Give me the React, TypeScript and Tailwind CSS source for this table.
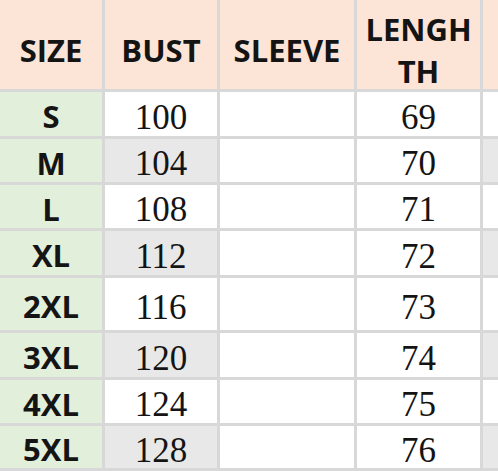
import React from "react";

type Row = { size: string; bust: string; len: string; gray: boolean };

const rows: Row[] = [
  { size: "S", bust: "100", len: "69", gray: false },
  { size: "M", bust: "104", len: "70", gray: true },
  { size: "L", bust: "108", len: "71", gray: false },
  { size: "XL", bust: "112", len: "72", gray: true },
  { size: "2XL", bust: "116", len: "73", gray: false },
  { size: "3XL", bust: "120", len: "74", gray: true },
  { size: "4XL", bust: "124", len: "75", gray: false },
  { size: "5XL", bust: "128", len: "76", gray: true },
];

const sans = "font-['Open_Sans','Noto_Sans',sans-serif] font-bold";
const serif = "font-['Liberation_Serif','Times_New_Roman',serif]";

export default function App() {
  return (
    <div className="w-[498px] h-[471px] overflow-hidden bg-white">
      <div className="grid grid-cols-[102px_112px_134px_123px_1fr] grid-rows-[89px_44px_43px_43px_44px_52px_44px_43px_42px] gap-[3px] bg-[#d8d8d8] pb-[3px] h-[471px] text-[#141414]">
        <div className={`bg-[#fce4d6] flex items-center justify-center pt-[12px] text-[31px] leading-none ${sans}`}>SIZE</div>
        <div className={`bg-[#fce4d6] flex items-center justify-center pt-[12px] text-[31px] leading-none ${sans}`}>BUST</div>
        <div className={`bg-[#fce4d6] flex items-center justify-center pt-[12px] text-[31px] leading-none ${sans}`}>SLEEVE</div>
        <div className={`bg-[#fce4d6] flex flex-col items-center justify-center pt-[10px] text-[31px] leading-[42px] ${sans}`}>
          <span>LENGH</span>
          <span>TH</span>
        </div>
        <div className="bg-[#fce4d6]" />
        {rows.map((r) => (
          <React.Fragment key={r.size}>
            <div className={`bg-[#e2efda] flex items-center justify-center pt-[5px] text-[31px] leading-none ${sans}`}>{r.size}</div>
            <div className={`${r.gray ? "bg-[#e8e8e8]" : "bg-white"} flex items-center justify-center pt-[6px] text-[35px] leading-none ${serif}`}>{r.bust}</div>
            <div className="bg-white" />
            <div className={`bg-white flex items-center justify-center pt-[6px] text-[35px] leading-none ${serif}`}>{r.len}</div>
            <div className={r.gray ? "bg-[#e8e8e8]" : "bg-white"} />
          </React.Fragment>
        ))}
      </div>
    </div>
  );
}
